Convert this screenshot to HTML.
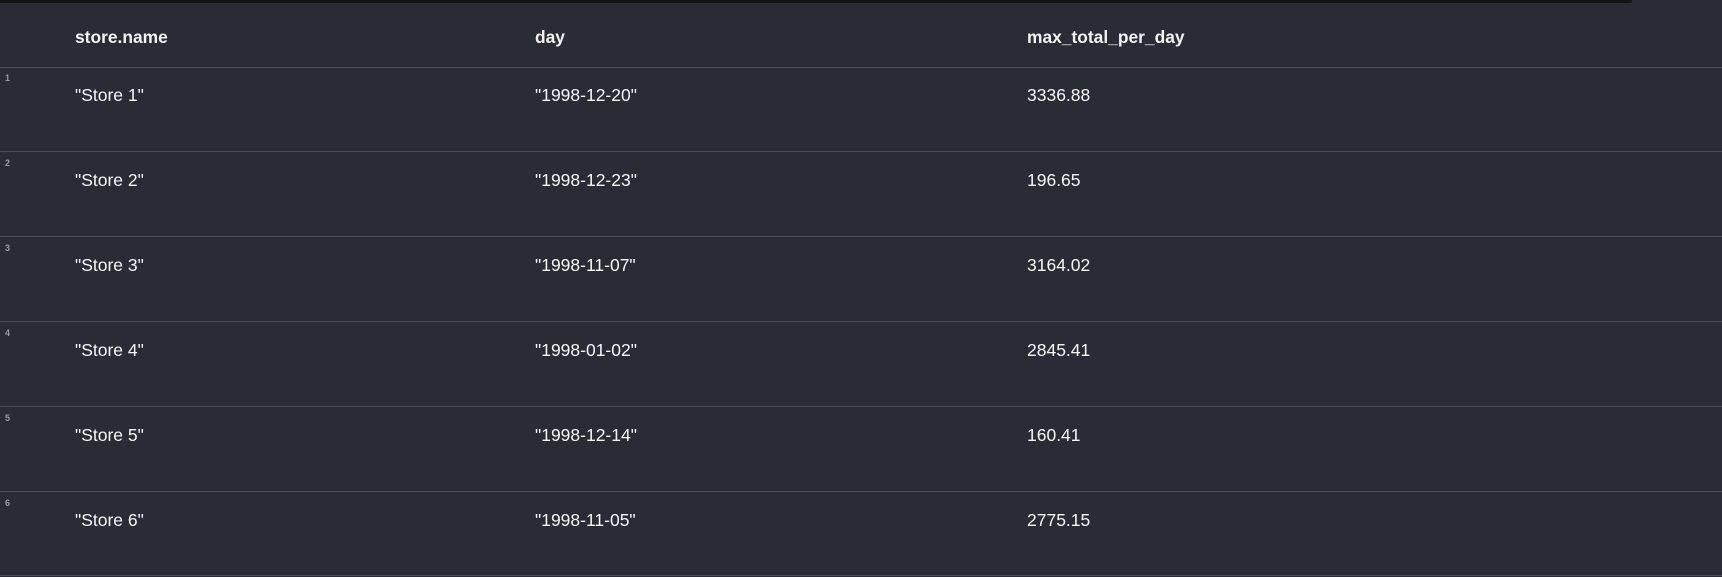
<!DOCTYPE html>
<html><head><style>
html,body{margin:0;padding:0;}
body{width:1722px;height:577px;background:#292c34;font-family:"Liberation Sans",sans-serif;position:relative;overflow:hidden;color:#fff;}
.top{position:absolute;left:0;top:0;width:1632px;height:3px;background:#131416;border-bottom-right-radius:2px;}
.h{position:absolute;top:27px;font-size:17.4px;font-weight:bold;color:#f2f2f2;}
.line{position:absolute;left:0;width:1722px;height:1px;background:#4a4d55;}
.c{position:absolute;font-size:17.5px;color:#f5f5f5;}
.n{position:absolute;left:5px;font-size:9px;font-weight:bold;color:#9a9ca2;}
</style></head><body>
<div class="top"></div>
<div class="h" style="left:75px">store.name</div>
<div class="h" style="left:535px">day</div>
<div class="h" style="left:1027px">max_total_per_day</div>
<div class="line" style="top:67px"></div>
<div class="line" style="top:151px"></div>
<div class="line" style="top:236px"></div>
<div class="line" style="top:321px"></div>
<div class="line" style="top:406px"></div>
<div class="line" style="top:491px"></div>
<div class="line" style="top:575px"></div>

<div class="n" style="top:73px">1</div>
<div class="c" style="left:75px;top:85px">"Store 1"</div><div class="c" style="left:535px;top:85px">"1998-12-20"</div><div class="c" style="left:1027px;top:85px">3336.88</div>
<div class="n" style="top:158px">2</div>
<div class="c" style="left:75px;top:170px">"Store 2"</div><div class="c" style="left:535px;top:170px">"1998-12-23"</div><div class="c" style="left:1027px;top:170px">196.65</div>
<div class="n" style="top:243px">3</div>
<div class="c" style="left:75px;top:255px">"Store 3"</div><div class="c" style="left:535px;top:255px">"1998-11-07"</div><div class="c" style="left:1027px;top:255px">3164.02</div>
<div class="n" style="top:328px">4</div>
<div class="c" style="left:75px;top:340px">"Store 4"</div><div class="c" style="left:535px;top:340px">"1998-01-02"</div><div class="c" style="left:1027px;top:340px">2845.41</div>
<div class="n" style="top:413px">5</div>
<div class="c" style="left:75px;top:425px">"Store 5"</div><div class="c" style="left:535px;top:425px">"1998-12-14"</div><div class="c" style="left:1027px;top:425px">160.41</div>
<div class="n" style="top:498px">6</div>
<div class="c" style="left:75px;top:510px">"Store 6"</div><div class="c" style="left:535px;top:510px">"1998-11-05"</div><div class="c" style="left:1027px;top:510px">2775.15</div>
</body></html>
